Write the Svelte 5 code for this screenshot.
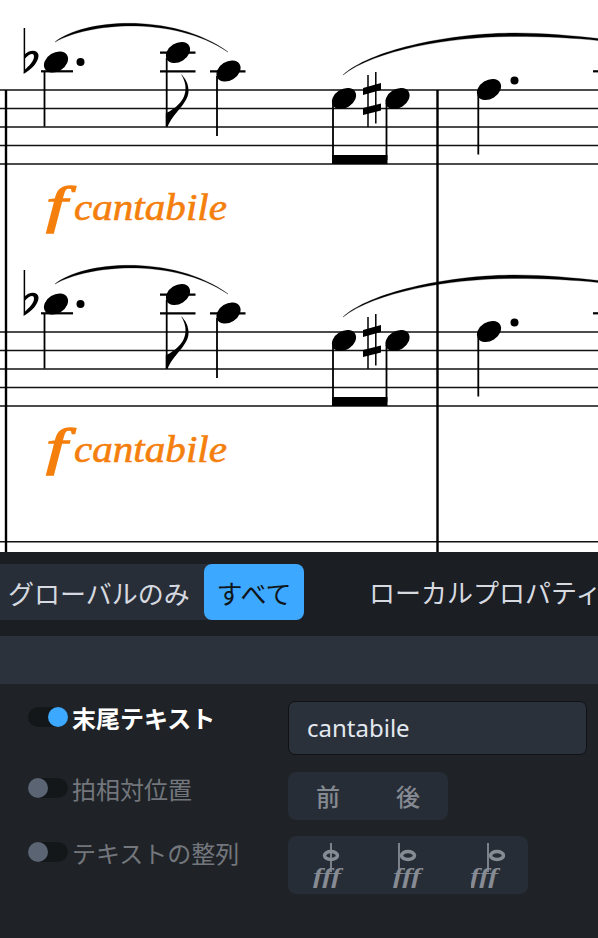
<script lang="ts">
  // Score excerpt on top, text properties panel below
  const staffLines = [0, 18.4, 37, 55.5, 74];
  const systems = [90, 332];

  const alignIcons = [
    { stem: 20, head: 20, fff: 2 },
    { stem: 8, head: 17, fff: 2 },
    { stem: 17, head: 26, fff: -1 }
  ];
</script>

{#snippet note(x: number, y: number)}
  <ellipse cx={x} cy={y} rx="13" ry="9.3" transform="rotate(-32 {x} {y})" />
{/snippet}

{#snippet system(top: number)}
  <g transform="translate(0 {top - 90})">
    <!-- flat + dotted note -->
    <path class="thin" d="M24.4 28 V73" />
    <path d="M24 55 C29 50 37 49 38.5 55 C39 62 31 70 23.5 74 L24.5 70 C29 66 34 61 34 56.5 C34 52 29 54 24.5 59 Z" />
    {@render note(56, 62)}
    <circle cx="80.5" cy="62" r="4" />
    <path class="ledger" d="M41 71.3 H73" />
    <path class="stem" d="M44.5 71 V126.5" />

    <!-- eighth with flag -->
    {@render note(178, 52.5)}
    <path class="ledger" d="M160 52.7 H195.5 M160 71.3 H195.5" />
    <path class="stem" d="M166.7 58 V126.5" />
    <path d="M181 74 C185 78 189 84 188.5 92 C187.5 104 173 113 167.5 127 L165.8 127 V113.5 C172 110 184.5 103 185.5 90 C186 84 184 79 181 74 Z" />

    <!-- third note -->
    {@render note(228.5, 71)}
    <path class="ledger" d="M210 71.3 H245.5" />
    <path class="stem" d="M217 76 V136" />

    <!-- slurs -->
    <path class="slur" d="M55 42 C85 18 175 13 228 52 C175 16 90 22 55 42 Z" />
    <path class="slur" d="M343 75 C370 50 450 33 515 33 C545 33 575 36 598 38.5 V40.5 C575 38 545 36.5 515 36.5 C450 36.5 375 50 343 75 Z" />

    <!-- beamed pair -->
    {@render note(344, 98.5)}
    {@render note(397.5, 98.5)}
    <path class="stem" d="M333 103 V160 M386.5 103 V160" />
    <rect x="332" y="155" width="55.5" height="9" />

    <!-- sharp -->
    <path class="thin" d="M368 75 V127 M375.8 72 V123.5" />
    <path d="M363 88 L381 83 V90 L363 95 Z M363 108 L381 103.5 V110.5 L363 115 Z" />

    <!-- next bar -->
    {@render note(489, 89.5)}
    <circle cx="514.5" cy="80.5" r="4" />
    <path class="stem" d="M478.3 95 V154.5" />
    <path class="ledger" d="M593 71.3 H598" />

    <text class="dyn" x="46" y="222" textLength="21" lengthAdjust="spacingAndGlyphs">f</text>
    <text class="expr" x="74" y="220" textLength="153" lengthAdjust="spacingAndGlyphs">cantabile</text>
  </g>
{/snippet}

<div class="app">
  <svg class="score" width="598" height="552" viewBox="0 0 598 552">
    <rect width="598" height="552" fill="#fff" />
    {#each systems as top}
      {#each staffLines as l}
        <path class="staff" d="M0 {top + l} H598" />
      {/each}
      {@render system(top)}
    {/each}
    <path class="staff" d="M0 541.7 H598" />
    <path class="bar" d="M6 90 V552 M437.5 90 V552" />
  </svg>

  <div class="panel">
    <div class="topbar">
      <div class="seg-main">
        <span class="seg-off">グローバルのみ</span>
        <span class="seg-on">すべて</span>
      </div>
      <span class="local">ローカルプロパティ</span>
    </div>
    <div class="band"></div>

    <div class="rows">
      <div class="labels">
        <div class="label-row first">
          <span class="toggle on"><span class="knob"></span></span>
          <span class="label active">末尾テキスト</span>
        </div>
        <div class="label-row second">
          <span class="toggle"><span class="knob"></span></span>
          <span class="label">拍相対位置</span>
        </div>
        <div class="label-row third">
          <span class="toggle"><span class="knob"></span></span>
          <span class="label">テキストの整列</span>
        </div>
      </div>

      <div class="controls">
        <div class="input">cantabile</div>
        <div class="group pos">
          <span class="btn">前</span>
          <span class="btn">後</span>
        </div>
        <div class="group align">
          {#each alignIcons as ic}
            <span class="btn">
              <svg width="34" height="46" viewBox="0 0 34 46">
                <path class="ic-stem" d="M{ic.stem} 1 V30" />
                <ellipse class="ic-head" cx={ic.head} cy="13.5" rx="6.5" ry="4" />
                <text class="ic-fff" x={ic.fff} y="41" textLength="28" lengthAdjust="spacingAndGlyphs">fff</text>
              </svg>
            </span>
          {/each}
        </div>
      </div>
    </div>
  </div>
</div>

<style>
  :global(body) {
    margin: 0;
    background: #1f2327;
  }

  .app {
    width: 598px;
    height: 938px;
    overflow: hidden;
    font-family: "Noto Sans CJK JP", "Noto Sans", sans-serif;
  }

  .score {
    display: block;
  }

  .staff {
    stroke: #111;
    stroke-width: 1.5;
  }

  .bar {
    stroke: #000;
    stroke-width: 2.4;
  }

  .stem {
    stroke: #000;
    stroke-width: 1.8;
    fill: none;
  }

  .thin {
    stroke: #000;
    stroke-width: 1.5;
    fill: none;
  }

  .ledger {
    stroke: #000;
    stroke-width: 2.2;
    fill: none;
  }

  .slur {
    fill: #000;
    stroke: #000;
    stroke-width: 0.3;
  }

  .dyn {
    font-family: "Liberation Serif", serif;
    font-style: italic;
    font-size: 50px;
    fill: #f57f0c;
    stroke: #f57f0c;
    stroke-width: 1.3;
  }

  .expr {
    font-family: "Liberation Serif", serif;
    font-style: italic;
    font-size: 38px;
    fill: #f57f0c;
    stroke: #f57f0c;
    stroke-width: 0.6;
  }

  .panel {
    display: flex;
    flex-direction: column;
    height: 386px;
    background: #1f2327;
  }

  .topbar {
    display: flex;
    align-items: flex-start;
    height: 84px;
    padding-top: 12px;
    box-sizing: border-box;
    flex: none;
    background: #1b1e22;
  }

  .seg-main {
    display: flex;
    align-items: center;
    width: 304px;
    height: 56px;
    flex: none;
    background: #282e37;
    border-radius: 0 8px 8px 0;
    font-size: 26px;
  }

  .seg-off {
    width: 204px;
    padding-left: 8px;
    box-sizing: border-box;
    color: #d6dae0;
    white-space: nowrap;
  }

  .seg-on {
    display: flex;
    align-items: center;
    justify-content: center;
    width: 100px;
    height: 56px;
    border-radius: 8px;
    background: #3da8ff;
    color: #10151a;
  }

  .local {
    margin-left: 65px;
    line-height: 56px;
    font-size: 26px;
    color: #d6dae0;
    white-space: nowrap;
  }

  .band {
    height: 48px;
    flex: none;
    background: #2c323c;
  }

  .rows {
    display: flex;
    padding-left: 28px;
  }

  .labels {
    width: 260px;
    flex: none;
  }

  .label-row {
    display: flex;
    align-items: center;
    gap: 4px;
    height: 36px;
  }

  .label-row.first {
    margin-top: 15px;
  }

  .label-row.second {
    margin-top: 35px;
  }

  .label-row.third {
    margin-top: 28px;
  }

  .toggle {
    position: relative;
    display: block;
    width: 40px;
    height: 20px;
    border-radius: 10px;
    background: #14171a;
  }

  .knob {
    position: absolute;
    top: 0;
    left: 0;
    width: 20px;
    height: 20px;
    border-radius: 50%;
    background: #5a6472;
  }

  .toggle.on .knob {
    left: 20px;
    background: #3da8ff;
  }

  .label {
    font-size: 24px;
    color: #73777d;
    white-space: nowrap;
  }

  .label.active {
    font-weight: 700;
    color: #fff;
  }

  .controls {
    display: flex;
    flex-direction: column;
    align-items: flex-start;
    padding-top: 17px;
  }

  .input {
    display: flex;
    align-items: center;
    box-sizing: border-box;
    width: 299px;
    height: 54px;
    padding: 0 0 2px 18px;
    background: #2b313b;
    border: 1.5px solid #0f1113;
    border-radius: 7px;
    font-family: "Noto Sans", sans-serif;
    font-size: 24px;
    color: #e3e8ef;
  }

  .group {
    display: flex;
    border-radius: 8px;
    background: #272d36;
  }

  .pos {
    height: 48px;
    margin-top: 17px;
  }

  .pos .btn {
    padding-bottom: 2px;
    box-sizing: border-box;
  }

  .align {
    height: 58px;
    margin-top: 16px;
  }

  .btn {
    display: flex;
    align-items: center;
    justify-content: center;
    width: 80px;
    font-size: 24px;
    font-weight: 500;
    color: #858a92;
  }

  .ic-stem {
    stroke: #868b94;
    stroke-width: 1.8;
    fill: none;
  }

  .ic-head {
    fill: none;
    stroke: #868b94;
    stroke-width: 3.5;
  }

  .ic-fff {
    font-family: "Liberation Serif", serif;
    font-style: italic;
    font-weight: 700;
    font-size: 21px;
    fill: #868b94;
  }
</style>
